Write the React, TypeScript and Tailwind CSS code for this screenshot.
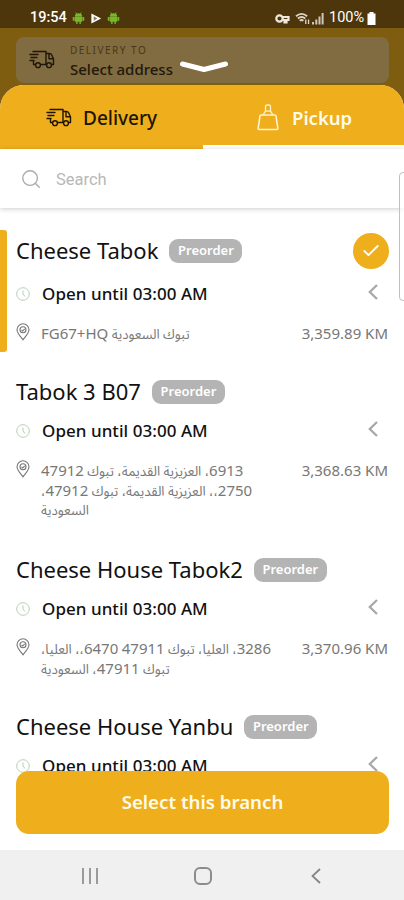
import { Check, Search } from "lucide-react"

const branches = [
  {
    name: "Cheese Tabok",
    lines: ["تبوك السعودية FG67+HQ"],
    distance: "3,359.89 KM",
    selected: true,
  },
  {
    name: "Tabok 3 B07",
    lines: ["6913، العزيزية القديمة، تبوك 47912", "2750،، العزيزية القديمة، تبوك 47912،", "السعودية"],
    distance: "3,368.63 KM",
  },
  {
    name: "Cheese House Tabok2",
    lines: ["3286، العليا، تبوك 47911 6470،، العليا،", "تبوك 47911، السعودية"],
    distance: "3,370.96 KM",
  },
  {
    name: "Cheese House Yanbu",
    lines: [],
    distance: "",
  },
]

function Truck({ className }: { className?: string }) {
  return (
    <svg viewBox="0 0 26 20" className={className} fill="none" stroke="currentColor" strokeWidth="1.400" strokeLinecap="round" strokeLinejoin="round">
      <path d="M4 1.500h13v13M17 3.500h3.500q1.500 0 2.300 1.500l1.700 4v5.500h-1.700M1 4.500h8M2 7.500h6M1 10.500h4M4.500 10.500v4h1.800M11.800 14.500h5.200" />
      <path d="M20 4v4.800h4" />
      <circle cx="9" cy="15.200" r="2.400" />
      <circle cx="20" cy="15.200" r="2.400" />
    </svg>
  )
}

function Bag() {
  return (
    <svg viewBox="0 0 22 27" className="h-[27px] w-[22px]" fill="none" stroke="#fff3d0" strokeWidth="1.600" strokeLinejoin="round">
      <path d="M4.200 11h13.600q1 0 1.200 1l1.800 12q.2 1.500-1 1.500H2.200q-1.200 0-1-1.500L3 12q.2-1 1.200-1z" />
      <path d="M6 11 8.500 7.200h5L16 11M8.500 7.200V2.500q0-1.500 1.500-1.500h2q1.500 0 1.500 1.500v4.700" strokeWidth="1.300" />
    </svg>
  )
}

function Android() {
  return (
    <svg viewBox="0 0 14 14" className="h-[13px] w-[13px]" fill="#76b82a">
      <path d="M3 5a4 3.600 0 0 1 8 0zM3 5.300h8v5.300H9.500V13H8v-2.400H6V13H4.500v-2.400H3zM.8 5.500h1.800v4H.8zM11.400 5.500h1.800v4h-1.800z" />
      <path d="m4 .5 1.300 1.800M10 .5 8.700 2.300" stroke="#76b82a" />
    </svg>
  )
}

function StatusBar() {
  return (
    <div className="flex h-7 items-center bg-[#4d360b] pt-2 pr-[28px] pl-[30px] font-['Roboto',sans-serif] text-[14.500px] font-medium text-white">
      <span className="w-[38px]">19:54</span>
      <div className="ml-[4px] flex items-center gap-1">
        <Android />
        <svg viewBox="0 0 14 14" className="h-[13px] w-[14px]">
          <path d="M2 1.500v11L12.500 7z" fill="#fff" />
          <path d="m4.500 4.500 4 2.500-4 2.500z" fill="#8d7b62" />
        </svg>
        <Android />
      </div>
      <div className="ml-auto flex items-center">
        <svg viewBox="0 0 15 11" className="h-[11px] w-[15px]" fill="none" stroke="#eee8df" strokeWidth="2.200">
          <circle cx="4.500" cy="5.500" r="3.200" />
          <path d="M7.500 4h6v3h-2v2.500H9.500V7h-2" />
        </svg>
        <svg viewBox="0 0 16 14" className="ml-[5px] h-[13px] w-[15px]" fill="none" stroke="#ded5c8" strokeWidth="2">
          <path d="M1 4.500q6-5 12 0M3 7q4-3.200 8 0M5 9.400q2-1.500 4 0" />
          <path d="M11.500 8v5M14.500 8v5" strokeWidth="1.400" />
        </svg>
        <svg viewBox="0 0 12 13" className="ml-[2px] h-[13px] w-[12px]" fill="#cfc6b8">
          <path d="M0 10h2v2.500H0zM3.300 7.500h2v5h-2zM6.500 4.500h2v8h-2zM9.600 1h2v11.500h-2z" />
        </svg>
        <span className="ml-[5px] w-[36px] text-[14.500px] font-normal">100%</span>
        <svg viewBox="0 0 9 13" className="ml-[2px] h-[13px] w-[9px]" fill="#fff">
          <path d="M2.500 0h4v1.500H8.500V13H.5V1.500h2z" />
        </svg>
      </div>
    </div>
  )
}

function AddressBar() {
  return (
    <div className="relative h-[57px] px-4 pt-[9px] pr-[15px]">
      <div className="flex h-[46px] items-center rounded-lg bg-[#816b40] pl-[13px] text-[#20180b]">
        <Truck className="h-[20px] w-[26px]" />
        <div className="ml-[15px] pt-[2px]">
          <div className="text-[10px] leading-[14px] tracking-[1.500px] text-[#4a3814]">DELIVERY TO</div>
          <div className="mt-px text-[15px] leading-[22px] font-medium whitespace-nowrap">Select address</div>
        </div>
      </div>
      <svg viewBox="0 0 48 14" className="absolute top-[32px] left-[180px] h-[14px] w-12" fill="none" stroke="#fff" strokeWidth="5" strokeLinecap="round" strokeLinejoin="round">
        <path d="M2.500 4 24 9.500 45.500 4" />
      </svg>
    </div>
  )
}

function Tabs() {
  return (
    <div className="flex h-16 shrink-0 rounded-t-[24px] bg-[#efae1b] text-[19px]">
      <div className="flex w-[203px] items-center pt-[2px] pl-[46px] text-[#211500]">
        <Truck className="h-[20px] w-[26px]" />
        <span className="ml-[11px] font-medium">Delivery</span>
      </div>
      <div className="flex flex-1 items-center border-b-4 border-white pt-[5px] pl-[54px] text-[#fffbea]">
        <Bag />
        <span className="ml-[13px] pt-px text-[18.500px] font-semibold">Pickup</span>
      </div>
    </div>
  )
}

// Latin letters and digits are set larger than the Arabic words around them
function AddressLine({ line }: { line: string }) {
  return (
    <div dir="rtl" className="h-5 text-left whitespace-nowrap">
      {line.split(/([A-Z0-9+]+)/).map((part, i) =>
        /[A-Z0-9]/.test(part) ? (
          <span key={i} className="text-[15px]">
            {part}
          </span>
        ) : (
          part
        ),
      )}
    </div>
  )
}

function Branch({ branch }: { branch: (typeof branches)[number] }) {
  return (
    <div className={branch.selected ? "relative pt-[3px] pr-[15px] pb-[9px] pl-4" : "pt-[26px] pr-[15px] pb-[9.600px] pl-4"}>
      {branch.selected && <div className="absolute inset-y-0 left-0 w-[7px] rounded-r-[3px] bg-[#efae1b]" />}
      <div className={branch.selected ? "flex h-9 items-center" : "flex h-7 items-center"}>
        <h2 className="pb-[2px] text-[22px] leading-7 whitespace-nowrap text-[#111]">{branch.name}</h2>
        <span className="ml-[11px] flex h-6 w-[73px] items-center justify-center rounded-[9px] bg-[#b4b4b4] text-[13px] font-semibold text-white">
          Preorder
        </span>
        {branch.selected && (
          <div className="ml-auto flex size-9 items-center justify-center rounded-full bg-[#efae1b]">
            <Check size={20} strokeWidth={2.2} color="#fff" />
          </div>
        )}
      </div>
      <div className="mt-[13px] flex h-6 items-center">
        <svg viewBox="0 0 14 14" className="size-[14px]" fill="none" stroke="#b9ceb9">
          <circle cx="7" cy="7" r="6.300" />
          <path d="M7 3.500V7l2 2.500" />
        </svg>
        <span className="ml-3 text-[17px] font-medium tracking-[0.05px] text-[#111]">Open until 03:00 AM</span>
        <svg viewBox="0 0 10 16" className="mr-[11px] mb-1 ml-auto h-4 w-[10px]" fill="none" stroke="#a8a8a8" strokeWidth="2.300">
          <path d="M9 1 1.800 8 9 15" />
        </svg>
      </div>
      <div className="mt-[17px] flex text-[15px] leading-5 text-[#777]">
        {branch.lines.length > 0 && (
          <svg viewBox="0 0 14 18" className="h-[18px] w-[14px] shrink-0" fill="none" stroke="#777" strokeWidth="1.100">
            <path d="M7 16.800C4 13 1 10 1 6.800a6 6 0 0 1 12 0C13 10 10 13 7 16.800z" />
            <circle cx="7" cy="6.800" r="3" />
            <path d="m5.500 6.800 1.200 1.200 2-2.200" />
          </svg>
        )}
        <div className="ml-[11px] font-['Noto_Sans','Noto_Sans_Arabic','DejaVu_Sans',sans-serif] text-[13.300px] leading-5">
          {branch.lines.map((line) => (
            <AddressLine key={line} line={line} />
          ))}
        </div>
        <span className="mr-px ml-auto">{branch.distance}</span>
      </div>
    </div>
  )
}

function NavBar() {
  return (
    <div className="flex h-[50px] shrink-0 items-center bg-[#f0f0f0] pt-px pr-[83px] pl-[82px] text-[#858585]">
      <svg viewBox="0 0 16 16" className="size-4" stroke="currentColor" strokeWidth="1.600">
        <path d="M1 0v16M8 0v16M15 0v16" />
      </svg>
      <div className="ml-[96px] size-[18px] rounded-[6px] border-2 border-[#8c8c8c]" />
      <svg viewBox="0 0 10 16" className="ml-auto h-4 w-[10px]" fill="none" stroke="currentColor" strokeWidth="1.800">
        <path d="M9 1 1.500 8 9 15" />
      </svg>
    </div>
  )
}

export default function App() {
  return (
    <div className="relative flex h-[900px] w-[404px] flex-col overflow-hidden bg-[#7e5c10] font-['Noto_Sans',sans-serif]">
      <StatusBar />
      <AddressBar />
      <div className="flex min-h-0 flex-1 flex-col rounded-t-[24px] bg-white">
        <Tabs />
        <div className="relative z-10 flex h-[59px] shrink-0 items-center bg-white pl-[20px] shadow-[0_1px_5px_rgba(0,0,0,0.2)]">
          <Search size={22} strokeWidth={1.500} color="#aaa" />
          <span className="ml-[14px] pt-[3px] font-['Roboto',sans-serif] text-[16.500px] text-[#b8b8b8]">Search</span>
        </div>
        <div className="relative min-h-0 flex-1 overflow-hidden pt-[22px]">
          {branches.map((branch) => (
            <Branch key={branch.name} branch={branch} />
          ))}
          <button className="absolute right-[15px] bottom-4 left-4 h-[63px] rounded-[13px] bg-[#efae1b] pb-px text-[18.700px] font-semibold text-[#fffbea]">
            Select this branch
          </button>
        </div>
        <NavBar />
      </div>
      <div className="absolute top-[172px] right-[-6px] z-20 h-[129px] w-[11px] rounded-[4px] border-[1.5px] border-[#c0c0c0] bg-white/60" />
    </div>
  )
}
